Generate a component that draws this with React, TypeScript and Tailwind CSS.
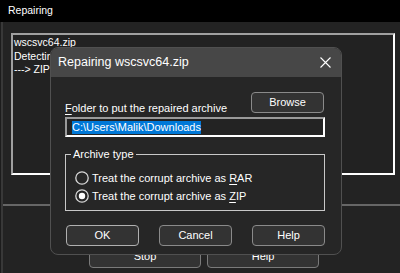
import React from "react";

const font = { fontFamily: '"Liberation Sans", Arial, sans-serif' };

function Btn({ children, className = "" }: { children: React.ReactNode; className?: string }) {
  return (
    <div
      className={
        "flex items-center justify-center rounded-[4px] border bg-[#333333] text-[11px] text-white " +
        className
      }
    >
      {children}
    </div>
  );
}

function Radio({ checked }: { checked?: boolean }) {
  return (
    <svg width="14" height="14" viewBox="0 0 14 14" className="shrink-0">
      <circle cx="7" cy="7" r="6.2" fill="#262626" stroke="#d8d8d8" strokeWidth="1.3" />
      {checked && <circle cx="7" cy="7" r="3.2" fill="#ffffff" />}
    </svg>
  );
}

export default function App() {
  return (
    <div className="relative h-[273px] w-[400px] overflow-hidden bg-[#1c1c1c]" style={font}>
      {/* Outer window title */}
      <div className="flex h-[22px] items-center bg-black pl-2 text-[10.5px] text-white">Repairing</div>

      {/* Outer window body */}
      <div className="ml-px flex h-[251px] flex-col border-l-2 border-[#383838] bg-[#232323]">
        <div className="ml-[8px] mt-[11px] h-[142px] w-[384px] border-2 border-b-white border-l-[#a0a0a0] border-r-white border-t-[#a0a0a0] bg-[#222222] pl-px pt-px text-[10.5px] leading-[13.5px] text-white">
          <div>wscsvc64.zip</div>
          <div>Detecting archive format</div>
          <div>---&gt; ZIP archive</div>
        </div>
        <div className="mt-[29px] h-[2px] bg-[#666666]" />
        <div className="ml-[86px] mt-[39px] flex gap-[6px]">
          <Btn className="h-[23px] w-[112px] border-[#7a7a7a]">Stop</Btn>
          <Btn className="h-[23px] w-[112px] border-[#7a7a7a]">Help</Btn>
        </div>
      </div>

      {/* Dialog */}
      <div className="absolute left-[50px] top-[47px] flex h-[208px] w-[292px] flex-col overflow-hidden rounded-[8px] border border-[#505050] bg-[#262626] text-white">
        <div className="flex h-[29px] shrink-0 items-center justify-between bg-[#474747] pl-[7px] pr-[10px]">
          <span className="text-[12.5px]">Repairing wscsvc64.zip</span>
          <svg width="11" height="11" viewBox="0 0 11 11">
            <path d="M0.5 0.5 L10.5 10.5 M10.5 0.5 L0.5 10.5" stroke="#ffffff" strokeWidth="1.1" />
          </svg>
        </div>

        <div className="flex flex-col pl-[14px] pr-[16px] text-[11px]">
          <div className="mt-[15px] flex h-[21px] items-end justify-between">
            <span className="-mb-[2px] leading-[13px]">
              <span className="underline underline-offset-2">F</span>older to put the repaired archive
            </span>
            <Btn className="mr-px h-[21px] w-[73px] border-[#8a8a8a]">Browse</Btn>
          </div>

          <div className="mt-[4px] flex h-[20px] items-center border-2 border-b-white border-l-[#9a9a9a] border-r-white border-t-[#9a9a9a] bg-[#232323] pl-[5px]">
            <span className="bg-[#0078d7] leading-[13px] text-white">C:\Users\Malik\Downloads</span>
          </div>

          <fieldset className="mt-[11px] border border-[#c8c8c8] pb-[5px] pl-[9px]">
            <legend className="-ml-[4px] px-[2px] leading-[13px]">Archive type</legend>
            <div className="mt-[8px] flex h-[18px] items-center gap-[3px]">
              <Radio />
              <span>
                Treat the corrupt archive as <span className="underline underline-offset-2">R</span>AR
              </span>
            </div>
            <div className="flex h-[18px] items-center gap-[3px]">
              <Radio checked />
              <span>
                Treat the corrupt archive as <span className="underline underline-offset-2">Z</span>IP
              </span>
            </div>
          </fieldset>

          <div className="ml-px mt-[14px] flex gap-[20px]">
            <Btn className="h-[21px] w-[73px] border-[#b0b0b0]">OK</Btn>
            <Btn className="h-[21px] w-[73px] border-[#8a8a8a]">Cancel</Btn>
            <Btn className="h-[21px] w-[73px] border-[#8a8a8a]">Help</Btn>
          </div>
        </div>
      </div>
    </div>
  );
}
